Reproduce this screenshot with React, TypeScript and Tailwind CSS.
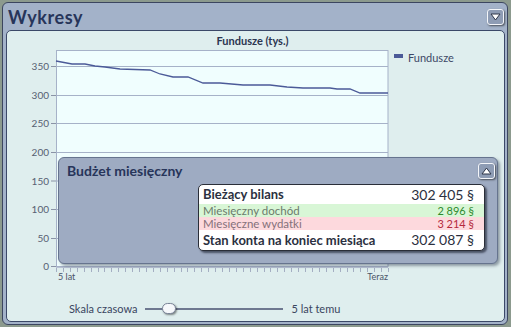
import React from "react";

const yTicks = [
  { v: 350, y: 66 },
  { v: 300, y: 95 },
  { v: 250, y: 123 },
  { v: 200, y: 152 },
  { v: 150, y: 180.5 },
  { v: 100, y: 209 },
  { v: 50, y: 238 },
  { v: 0, y: 266 },
];

const linePoints =
  "56,61 72,64 85,64 95,66 105,67 120,69 150,70 160,74 173,77 188,77 203,83 220,83 243,85 270,85 287,87 303,88 330,88 337,89 350,89 360,93 388,93";

const xTicks = Array.from({ length: 49 }, (_, i) => 56 + (i * 332) / 48);

function TriButton({ up }: { up?: boolean }) {
  return (
    <div className="w-[17px] h-[16px] rounded-[3px] border border-[#f4f6fa] bg-[#8e9cb4] shadow-[1px_1px_2px_rgba(0,0,0,0.55)] flex items-center justify-center">
      <svg width="11" height="8" viewBox="0 0 11 8">
        {up ? (
          <polygon points="1,7 5.5,1 10,7" fill="#ffffff" stroke="#2c3448" strokeWidth="1" />
        ) : (
          <polygon points="1,1 10,1 5.5,7" fill="#ffffff" stroke="#2c3448" strokeWidth="1" />
        )}
      </svg>
    </div>
  );
}

function Chart() {
  return (
    <svg width="496" height="251" viewBox="7 47 496 251" className="block">
      <rect x="56.5" y="50.5" width="331.5" height="216" fill="#f0fefe" stroke="#a6b2c8" />
      {yTicks.map((t) => (
        <g key={t.v}>
          {t.v !== 0 && <line x1="56" x2="388" y1={t.y + 0.5} y2={t.y + 0.5} stroke="#a6b2c8" />}
          <line x1="51" x2="56" y1={t.y + 0.5} y2={t.y + 0.5} stroke="#8a93a6" />
          <text x="49" y={t.y + 4} fontSize="10" textAnchor="end" fill="#575f72" fontFamily="Lato, sans-serif">
            {t.v}
          </text>
        </g>
      ))}
      <polyline points={linePoints} fill="none" stroke="#4b5a98" strokeWidth="1.3" />
      <line x1="56" x2="388" y1="267.5" y2="267.5" stroke="#b8c2d4" />
      {xTicks.map((x, i) => (
        <line key={i} x1={Math.round(x) + 0.5} x2={Math.round(x) + 0.5} y1="268" y2="272" stroke="#a4aec2" />
      ))}
      <text x="58" y="280" fontSize="9" fill="#4a5468" fontFamily="Lato, sans-serif">5 lat</text>
      <text x="388" y="280" fontSize="9" textAnchor="end" fill="#4a5468" fontFamily="Lato, sans-serif">Teraz</text>
      <rect x="394" y="54" width="9" height="4" fill="#4b5a98" />
      <text x="408" y="62" fontSize="11" fill="#3d4866" fontFamily="Lato, sans-serif">Fundusze</text>
    </svg>
  );
}

function Budget() {
  return (
    <div className="absolute left-[51px] top-[126px] w-[440px] h-[107px] rounded-[6px] border border-[#66748e] bg-[#9eabc2] shadow-[2px_2px_3px_rgba(40,50,70,0.45)]">
      <div className="flex items-center justify-between pl-[8px] pr-[2px] pt-[4px]">
        <span className="text-[14px] font-bold text-[#27355a] leading-[18px]">Budżet miesięczny</span>
        <TriButton up />
      </div>
      <div className="ml-[139px] mt-[4px] w-[287px] rounded-[5px] border border-[#2a2e38] bg-white overflow-hidden shadow-[2px_2px_2px_rgba(20,25,40,0.6)]">
        <div className="flex justify-between items-center h-[19px] pl-[4px] pr-[10px] text-[13px] leading-[19px] font-bold text-[#2b3040]">
          <span>Bieżący bilans</span>
          <span className="font-normal text-[14px]">302 405 §</span>
        </div>
        <div className="flex justify-between items-center h-[13px] pl-[4px] pr-[10px] bg-[#d8f6d6] text-[11.5px] leading-[13px]">
          <span className="text-[#6c7a6c]">Miesięczny dochód</span>
          <span className="text-[#2e8a2e] text-[11px]">2 896 §</span>
        </div>
        <div className="flex justify-between items-center h-[13px] pl-[4px] pr-[10px] bg-[#fdd9dd] text-[11.5px] leading-[13px]">
          <span className="text-[#85707a]">Miesięczne wydatki</span>
          <span className="text-[#b52a3c] text-[11px]">3 214 §</span>
        </div>
        <div className="flex justify-between items-center h-[20px] pl-[4px] pr-[10px] text-[13px] leading-[20px] font-bold text-[#2b3040]">
          <span>Stan konta na koniec miesiąca</span>
          <span className="font-normal text-[14px]">302 087 §</span>
        </div>
      </div>
    </div>
  );
}

export default function App() {
  return (
    <div className="w-[511px] h-[327px] bg-[#8c9a8e] pt-[2px] pl-[2px] overflow-hidden" style={{ fontFamily: "Lato, 'Open Sans', sans-serif" }}>
      <div className="w-[506px] h-[323px] rounded-[6px] border border-[#3c4660] bg-[#a3b2c9] flex flex-col">
        <div className="h-[27px] flex items-center justify-between pl-[5px] pr-[3px] pt-[1px]">
          <span className="text-[18px] tracking-[0.6px] font-bold text-[#27355a] leading-none">Wykresy</span>
          <TriButton />
        </div>
        <div className="ml-[3px] w-[499px] h-[292px] rounded-[5px] border border-[#3b4868] bg-[#dfeeee] relative flex flex-col">
          <div className="h-[16px] pt-[3px] text-center text-[11px] font-bold text-[#2b3550] leading-[13px] pr-[6px]">
            Fundusze (tys.)
          </div>
          <Chart />
          <div className="h-[22px] flex items-center pl-[62px] text-[11px] text-[#3a4560]">
            <span>Skala czasowa</span>
            <div className="relative ml-[8px] w-[138px] h-[2px] bg-[#6e7890]">
              <div className="absolute left-[17px] -top-[5px] w-[14px] h-[11px] rounded-full border border-[#7a8498] bg-[#f6f8fb] shadow-[1px_1px_2px_rgba(0,0,0,0.45)]" />
            </div>
            <span className="ml-[8px]">5 lat temu</span>
          </div>
          <Budget />
        </div>
      </div>
    </div>
  );
}
